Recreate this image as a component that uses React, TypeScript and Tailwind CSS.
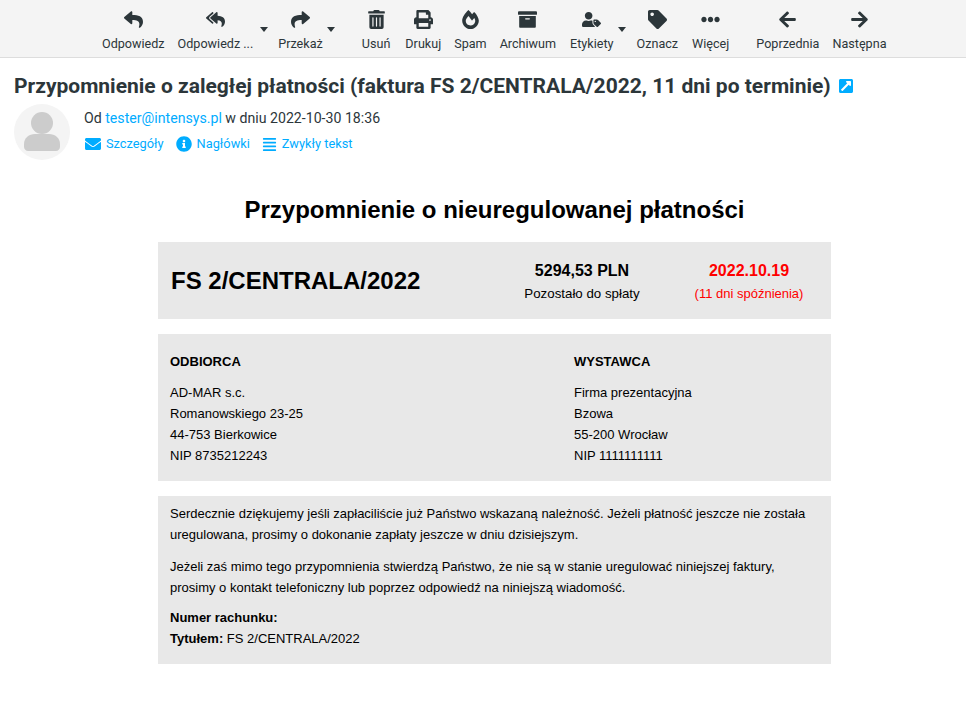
import type { ReactNode } from 'react';
import {
  FaReply,
  FaReplyAll,
  FaShare,
  FaTrashAlt,
  FaPrint,
  FaFireAlt,
  FaArchive,
  FaUserTag,
  FaTag,
  FaEllipsisH,
  FaArrowLeft,
  FaArrowRight,
  FaEnvelope,
  FaInfoCircle,
  FaAlignJustify,
  FaExternalLinkSquareAlt,
} from 'react-icons/fa';

function ToolButton({ icon, label, caret, className = '' }: { icon: ReactNode; label: string; caret?: string; className?: string }) {
  return (
    <div className={`relative flex flex-col items-center shrink-0 ${className}`}>
      <div className="h-[24px] mt-[7px] flex items-center justify-center text-[#2c363a] text-[19px]">{icon}</div>
      <span className="mt-[3px] text-[12.6px] leading-[20px] text-[#2c363a] whitespace-nowrap">{label}</span>
      {caret && (
        <span className={`absolute top-[27px] w-0 h-0 border-x-[4px] border-x-transparent border-t-[5px] border-t-[#2c363a] ${caret}`} />
      )}
    </div>
  );
}

function Toolbar() {
  return (
    <div className="h-[58px] bg-[#f4f4f4] border-b border-[#dddddd] flex items-start pl-[102px]">
      <ToolButton icon={<FaReply />} label="Odpowiedz" className="mr-[13px]" />
      <ToolButton icon={<FaReplyAll />} label="Odpowiedz ..." caret="right-[-15px]" className="mr-[25px]" />
      <ToolButton icon={<FaShare />} label="Przekaż" caret="right-[-12px]" className="mr-[39px]" />
      <ToolButton icon={<FaTrashAlt />} label="Usuń" className="mr-[15px]" />
      <ToolButton icon={<FaPrint />} label="Drukuj" className="mr-[13px]" />
      <ToolButton icon={<FaFireAlt />} label="Spam" className="mr-[13px]" />
      <ToolButton icon={<FaArchive />} label="Archiwum" className="mr-[14px]" />
      <ToolButton icon={<FaUserTag />} label="Etykiety" caret="right-[-12px]" className="mr-[23px]" />
      <ToolButton icon={<FaTag />} label="Oznacz" className="mr-[14px]" />
      <ToolButton icon={<FaEllipsisH />} label="Więcej" className="mr-[27px]" />
      <ToolButton icon={<FaArrowLeft />} label="Poprzednia" className="mr-[13px]" />
      <ToolButton icon={<FaArrowRight />} label="Następna" />
    </div>
  );
}

function Avatar() {
  return (
    <div className="w-[56px] h-[56px] rounded-full bg-[#f4f4f4] flex items-center justify-center shrink-0">
      <svg viewBox="0 0 56 56" className="w-[56px] h-[56px]">
        <circle cx="28" cy="19" r="11" fill="#cccccc" />
        <path d="M10 40c0-6 5-10 11-10h14c6 0 11 4 11 10v3c0 2-2 4-4 4H14c-2 0-4-2-4-4z" fill="#cccccc" />
      </svg>
    </div>
  );
}

function Header() {
  return (
    <div className="px-[14px] pt-[14px]">
      <h1 className="flex items-center text-[21px] leading-[28px] font-bold text-[#2c363a] whitespace-nowrap">
        Przypomnienie o zaległej płatności (faktura FS 2/CENTRALA/2022, 11 dni po terminie)
        <FaExternalLinkSquareAlt className="ml-[7px] text-[#00acff] text-[16px]" />
      </h1>
      <div className="flex mt-[4px]">
        <Avatar />
        <div className="ml-[14px] pt-[4px]">
          <div className="text-[14.15px] leading-[21px] text-[#2c363a]">
            Od <span className="text-[#00acff]">tester@intensys.pl</span> w dniu 2022-10-30 18:36
          </div>
          <div className="flex items-center mt-[5px] text-[12.8px] leading-[20px] text-[#00acff]">
            <FaEnvelope className="text-[16px] ml-[1px] mr-[5px]" />
            <span>Szczegóły</span>
            <FaInfoCircle className="text-[16px] ml-[12px] mr-[5px]" />
            <span>Nagłówki</span>
            <FaAlignJustify className="text-[15px] ml-[12px] mr-[5px]" />
            <span>Zwykły tekst</span>
          </div>
        </div>
      </div>
    </div>
  );
}

function InvoiceBody() {
  return (
    <div className="ml-[158px] w-[673px] mt-[32px] text-black text-[13px] leading-[21px] font-['Liberation_Sans',Arial,sans-serif]">
      <h2 className="text-center text-[24px] leading-[34px] pt-[1px] font-bold">Przypomnienie o nieuregulowanej płatności</h2>

      <div className="mt-[15px] h-[77px] bg-[#e8e8e8] flex items-center pl-[13px]">
        <div className="flex-1 text-[24px] font-bold">FS 2/CENTRALA/2022</div>
        <div className="w-[170px] pt-[2px] text-center">
          <div className="text-[16px] leading-[24px] font-bold">5294,53 PLN</div>
          <div className="text-[13.3px]">Pozostało do spłaty</div>
        </div>
        <div className="w-[164px] pt-[2px] text-center text-[#ff0000]">
          <div className="text-[16px] leading-[24px] font-bold">2022.10.19</div>
          <div>(11 dni spóźnienia)</div>
        </div>
      </div>

      <div className="mt-[15px] h-[147px] bg-[#e8e8e8] flex pl-[12px] pt-[17px]">
        <div className="w-[404px]">
          <div className="font-bold">ODBIORCA</div>
          <div className="mt-[10px]">AD-MAR s.c.</div>
          <div>Romanowskiego 23-25</div>
          <div>44-753 Bierkowice</div>
          <div>NIP 8735212243</div>
        </div>
        <div>
          <div className="font-bold">WYSTAWCA</div>
          <div className="mt-[10px]">Firma prezentacyjna</div>
          <div>Bzowa</div>
          <div>55-200 Wrocław</div>
          <div>NIP 1111111111</div>
        </div>
      </div>

      <div className="mt-[15px] h-[168px] bg-[#e8e8e8] px-[12px] pt-[7px]">
        <p>
          Serdecznie dziękujemy jeśli zapłaciliście już Państwo wskazaną należność. Jeżeli płatność jeszcze nie została uregulowana, prosimy o dokonanie zapłaty jeszcze w dniu dzisiejszym.
        </p>
        <p className="mt-[11px]">
          Jeżeli zaś mimo tego przypomnienia stwierdzą Państwo, że nie są w stanie uregulować niniejszej faktury, prosimy o kontakt telefoniczny lub poprzez odpowiedź na niniejszą wiadomość.
        </p>
        <p className="mt-[9px]">
          <b>Numer rachunku:</b>
          <br />
          <b>Tytułem:</b> FS 2/CENTRALA/2022
        </p>
      </div>
    </div>
  );
}

export default function App() {
  return (
    <div className="w-[966px] h-[720px] bg-white overflow-hidden font-['Roboto',sans-serif]">
      <Toolbar />
      <Header />
      <InvoiceBody />
    </div>
  );
}
